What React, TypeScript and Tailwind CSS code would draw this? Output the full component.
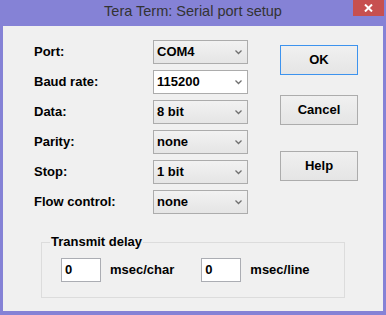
import React from "react";

const Arrow = () => (
  <svg width="7" height="5" viewBox="0 0 7 5" className="shrink-0">
    <path d="M0.5 0.5 L3.5 3.5 L6.5 0.5" fill="none" stroke="#707070" strokeWidth="1.3" />
  </svg>
);

const Select = ({ value, white }: { value: string; white?: boolean }) => (
  <div
    className={`h-[24px] w-[95px] border border-[#acacac] flex items-center justify-between pl-[3px] pr-[5px] ${
      white ? "bg-white" : "bg-gradient-to-b from-[#f2f2f2] to-[#e5e5e5]"
    }`}
  >
    <span>{value}</span>
    <Arrow />
  </div>
);

const Button = ({ label, focused, mt }: { label: string; focused?: boolean; mt: string }) => (
  <div
    className={`${mt} h-[30px] w-[78px] flex items-center justify-center bg-gradient-to-b from-[#f0f0f0] to-[#e5e5e5] border ${
      focused ? "border-[#3d93ee]" : "border-[#acacac]"
    }`}
  >
    {label}
  </div>
);

export default function App() {
  const rows: [string, string, boolean?][] = [
    ["Port:", "COM4"],
    ["Baud rate:", "115200", true],
    ["Data:", "8 bit"],
    ["Parity:", "none"],
    ["Stop:", "1 bit"],
    ["Flow control:", "none"],
  ];
  return (
    <div className="w-[386px] h-[315px] bg-[#8582d6] flex flex-col">
      <div className="h-[26px] flex items-start relative shrink-0">
        <div
          className="flex-1 text-center text-[#333333] text-[14.5px] leading-[22px]"
          style={{ fontFamily: '"Liberation Sans", sans-serif' }}
        >
          Tera Term: Serial port setup
        </div>
        <div className="absolute right-[2px] top-0 w-[31px] h-[16px] bg-[#c75050] flex items-center justify-center">
          <svg width="9" height="8" viewBox="0 0 9 8">
            <path d="M1 0.5 L8 7.5 M8 0.5 L1 7.5" stroke="white" strokeWidth="2" />
          </svg>
        </div>
      </div>
      <div
        className="mx-[3px] mb-[4px] flex-1 bg-[#f0f0f0] text-black font-bold text-[13px] flex flex-col"
        style={{ fontFamily: '"Liberation Sans", Arial, sans-serif' }}
      >
        <div className="flex">
          <div className="pl-[31px] pt-[14px] grid grid-cols-[119px_95px] gap-y-[6px]">
            {rows.map(([l, v, w]) => (
              <React.Fragment key={l}>
                <div className="h-[24px] flex items-center">{l}</div>
                <Select value={v} white={w} />
              </React.Fragment>
            ))}
          </div>
          <div className="ml-[32px] pt-[19px] flex flex-col">
            <Button label="OK" focused mt="mt-0" />
            <Button label="Cancel" mt="mt-[20px]" />
            <Button label="Help" mt="mt-[26px]" />
          </div>
        </div>
        <div className="ml-[38px] mt-[28px] w-[304px] h-[56px] border border-[#dcdcdc] relative flex items-start pl-[19px] pt-[15px]">
          <div className="absolute left-[8px] top-[-9px] px-[1px] bg-[#f0f0f0] leading-[16px]">Transmit delay</div>
          <div className="h-[24px] w-[40px] bg-white border border-[#abadb3] flex items-center pl-[3px]">0</div>
          <div className="h-[24px] ml-[9px] flex items-center">msec/char</div>
          <div className="h-[24px] w-[40px] ml-[27px] bg-white border border-[#abadb3] flex items-center pl-[3px]">0</div>
          <div className="h-[24px] ml-[9px] flex items-center">msec/line</div>
        </div>
      </div>
    </div>
  );
}
